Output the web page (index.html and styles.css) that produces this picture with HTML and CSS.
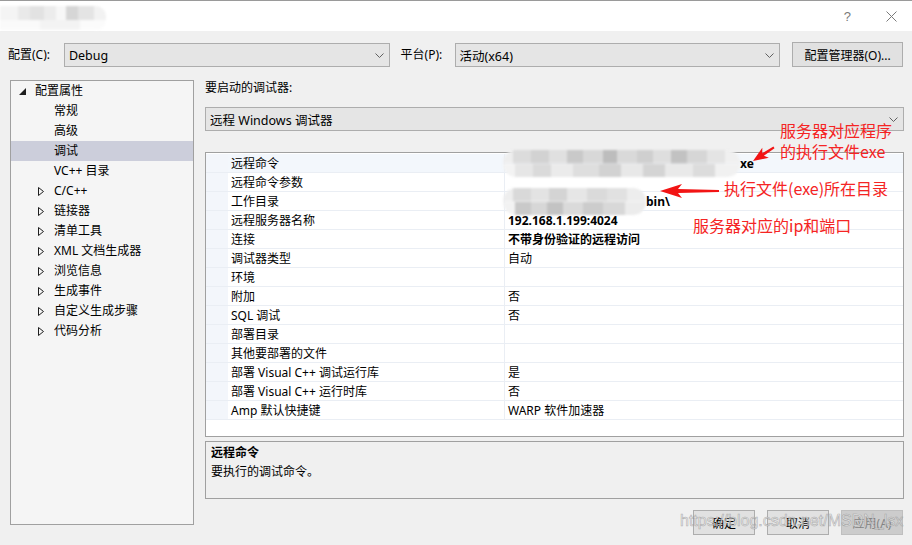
FILE: index.html
```html
<!DOCTYPE html>
<html lang="zh-CN">
<head>
  <meta charset="UTF-8">
  <meta name="viewport" content="width=device-width, initial-scale=1.0">
  <title>调试 属性页</title>
  <link rel="stylesheet" href="styles.css">
</head>
<body>
  <div class="dialog">
    <div class="titlebar">
      <div class="title-smudge"></div>
      <span class="help">?</span>
      <svg class="close" width="11" height="11" viewBox="0 0 11 11">
        <path d="M0.5 0.5 L10.5 10.5 M10.5 0.5 L0.5 10.5" stroke="#7a7a7a" stroke-width="1" fill="none"/>
      </svg>
    </div>

    <div class="toolbar">
      <span class="tb-label">配置(C):</span>
      <div class="select cfg">
        <span>Debug</span>
        <svg class="chev" width="9" height="5" viewBox="0 0 9 5"><path d="M0.5 0.5 L4.5 4.5 L8.5 0.5" stroke="#606060" fill="none"/></svg>
      </div>
      <span class="tb-label plat">平台(P):</span>
      <div class="select cfg">
        <span>活动(x64)</span>
        <svg class="chev" width="9" height="5" viewBox="0 0 9 5"><path d="M0.5 0.5 L4.5 4.5 L8.5 0.5" stroke="#606060" fill="none"/></svg>
      </div>
      <button class="btn mgr">配置管理器(O)...</button>
    </div>

    <div class="main">
      <div class="tree">
        <div class="node root">
          <span class="tw"><svg width="7" height="7" viewBox="0 0 7 7"><path d="M7 0 L7 7 L0 7 Z" fill="#1e1e1e"/></svg></span>
          <span>配置属性</span>
        </div>
        <div class="node leaf">常规</div>
        <div class="node leaf">高级</div>
        <div class="node leaf selected">调试</div>
        <div class="node leaf">VC++ 目录</div>
        <div class="node branch"><span class="tw"><svg width="6" height="9" viewBox="0 0 6 9"><path d="M0.5 0.5 L5.5 4.5 L0.5 8.5 Z" fill="none" stroke="#1e1e1e"/></svg></span><span>C/C++</span></div>
        <div class="node branch"><span class="tw"><svg width="6" height="9" viewBox="0 0 6 9"><path d="M0.5 0.5 L5.5 4.5 L0.5 8.5 Z" fill="none" stroke="#1e1e1e"/></svg></span><span>链接器</span></div>
        <div class="node branch"><span class="tw"><svg width="6" height="9" viewBox="0 0 6 9"><path d="M0.5 0.5 L5.5 4.5 L0.5 8.5 Z" fill="none" stroke="#1e1e1e"/></svg></span><span>清单工具</span></div>
        <div class="node branch"><span class="tw"><svg width="6" height="9" viewBox="0 0 6 9"><path d="M0.5 0.5 L5.5 4.5 L0.5 8.5 Z" fill="none" stroke="#1e1e1e"/></svg></span><span>XML 文档生成器</span></div>
        <div class="node branch"><span class="tw"><svg width="6" height="9" viewBox="0 0 6 9"><path d="M0.5 0.5 L5.5 4.5 L0.5 8.5 Z" fill="none" stroke="#1e1e1e"/></svg></span><span>浏览信息</span></div>
        <div class="node branch"><span class="tw"><svg width="6" height="9" viewBox="0 0 6 9"><path d="M0.5 0.5 L5.5 4.5 L0.5 8.5 Z" fill="none" stroke="#1e1e1e"/></svg></span><span>生成事件</span></div>
        <div class="node branch"><span class="tw"><svg width="6" height="9" viewBox="0 0 6 9"><path d="M0.5 0.5 L5.5 4.5 L0.5 8.5 Z" fill="none" stroke="#1e1e1e"/></svg></span><span>自定义生成步骤</span></div>
        <div class="node branch"><span class="tw"><svg width="6" height="9" viewBox="0 0 6 9"><path d="M0.5 0.5 L5.5 4.5 L0.5 8.5 Z" fill="none" stroke="#1e1e1e"/></svg></span><span>代码分析</span></div>
      </div>

      <div class="pane">
        <div class="pane-label">要启动的调试器:</div>
        <div class="select wide">
          <span>远程 Windows 调试器</span>
          <svg class="chev" width="9" height="5" viewBox="0 0 9 5"><path d="M0.5 0.5 L4.5 4.5 L8.5 0.5" stroke="#606060" fill="none"/></svg>
        </div>

        <div class="grid">
          <div class="row current"><span class="gutter"></span><span class="name">远程命令</span><span class="value"><span class="smudge long"></span><b>xe</b></span></div>
          <div class="row"><span class="gutter"></span><span class="name">远程命令参数</span><span class="value"></span></div>
          <div class="row"><span class="gutter"></span><span class="name">工作目录</span><span class="value"><span class="smudge short"></span><b>bin\</b></span></div>
          <div class="row"><span class="gutter"></span><span class="name">远程服务器名称</span><span class="value"><b>192.168.1.199:4024</b></span></div>
          <div class="row"><span class="gutter"></span><span class="name">连接</span><span class="value"><b>不带身份验证的远程访问</b></span></div>
          <div class="row"><span class="gutter"></span><span class="name">调试器类型</span><span class="value">自动</span></div>
          <div class="row"><span class="gutter"></span><span class="name">环境</span><span class="value"></span></div>
          <div class="row"><span class="gutter"></span><span class="name">附加</span><span class="value">否</span></div>
          <div class="row"><span class="gutter"></span><span class="name">SQL 调试</span><span class="value">否</span></div>
          <div class="row"><span class="gutter"></span><span class="name">部署目录</span><span class="value"></span></div>
          <div class="row"><span class="gutter"></span><span class="name">其他要部署的文件</span><span class="value"></span></div>
          <div class="row"><span class="gutter"></span><span class="name">部署 Visual C++ 调试运行库</span><span class="value">是</span></div>
          <div class="row"><span class="gutter"></span><span class="name">部署 Visual C++ 运行时库</span><span class="value">否</span></div>
          <div class="row"><span class="gutter"></span><span class="name">Amp 默认快捷键</span><span class="value">WARP 软件加速器</span></div>
        </div>

        <div class="desc">
          <div class="desc-title">远程命令</div>
          <div>要执行的调试命令。</div>
        </div>

        <div class="buttons">
          <button class="btn">确定</button>
          <button class="btn">取消</button>
          <button class="btn disabled">应用(A)</button>
        </div>
      </div>
    </div>

    <!-- red notes drawn over the screenshot -->
    <div class="note note-exe">服务器对应程序<br>的执行文件exe</div>
    <div class="note note-dir">执行文件(exe)所在目录</div>
    <div class="note note-ip">服务器对应的ip和端口</div>
    <svg class="arrows" width="912" height="545" viewBox="0 0 912 545">
      <polygon transform="translate(753 161) rotate(-33)" points="0,0 15,-6 12,-1.5 25,-1 25,1 12,1.5 15,6" fill="#f21414"/>
      <polygon transform="translate(660 191)" points="0,0 22,-7 18,-2 59,-1 59,1 18,2 22,7" fill="#f21414"/>
    </svg>
    <div class="watermark">https://blog.csdn.net/MSDN_lsx</div>
  </div>
</body>
</html>
```

FILE: styles.css
```css
* {
  box-sizing: border-box;
}

body {
  margin: 0;
  background-color: #f0f0f0;
  font-family: "Noto Sans", "Noto Sans CJK SC", sans-serif;
  font-size: 12px;
  color: #000;
}

.dialog {
  position: relative;
  width: 912px;
  height: 545px;
  overflow: hidden;
}

.titlebar {
  height: 31px;
  background: #fff;
  border-top: 1px solid #9a9a9a;
  display: flex;
  align-items: center;
}

.title-smudge {
  width: 106px;
  height: 24px;
  margin-top: 3px;
  border-radius: 0 10px 10px 0;
  background:
    linear-gradient(90deg, #f4f4f4 0 18px, #e9e9e9 18px 30px, #e2e2e2 30px 44px, #ececec 44px 56px, #f7f7f7 56px 66px, #d6d6d6 66px 78px, #e4e4e4 78px 94px, #f2f2f2 94px) top / 100% 60% no-repeat,
    linear-gradient(90deg, #fafafa 0 40px, #f3f3f3 40px 80px, #fbfbfb 80px) bottom / 100% 40% no-repeat;
  filter: blur(1px);
}

.help {
  margin-left: auto;
  color: #7a7a7a;
  font-size: 13px;
  font-family: "Liberation Sans", sans-serif;
}

.close {
  margin: 0 15px 0 35px;
}

.toolbar {
  height: 49px;
  padding: 11px 9px 0 8px;
  display: flex;
  align-items: flex-start;
}

.tb-label {
  width: 56px;
  line-height: 25px;
}

.tb-label.plat {
  margin-left: 11px;
  width: 54px;
}

.select {
  height: 24px;
  margin-top: 1px;
  background: #e5e5e5;
  border: 1px solid #adadad;
  display: flex;
  align-items: center;
  padding: 0 5px 0 4px;
  font-size: 12.5px;
}

.select span {
  flex: 1;
}

.select.cfg {
  width: 326px;
}

.btn {
  font-family: inherit;
  font-size: 12px;
  color: #000;
  background: #e1e1e1;
  border: 1px solid #adadad;
  height: 25px;
  padding: 0;
}

.btn.mgr {
  width: 111px;
  margin-left: 12px;
}

.main {
  display: flex;
  padding: 0 8px 0 10px;
}

.tree {
  width: 184px;
  height: 445px;
  background: #f5f5f5;
  border: 1px solid #a0a0a0;
}

.node {
  height: 20px;
  line-height: 20px;
  display: flex;
  align-items: center;
  white-space: nowrap;
}

.node .tw {
  width: 16px;
  display: flex;
  align-items: center;
}

.node.root {
  padding-left: 8px;
}

.node.branch {
  padding-left: 27px;
}

.node.leaf {
  padding-left: 43px;
}

.node.selected {
  background: #cccedb;
}

.pane {
  flex: 1;
  margin-left: 11px;
  display: flex;
  flex-direction: column;
}

.pane-label {
  line-height: 16px;
}

.select.wide {
  margin-top: 11px;
}

.grid {
  margin-top: 21px;
  height: 285px;
  background: #fff;
  border: 1px solid #a0a0a0;
  padding-top: 1px;
}

.row {
  display: flex;
  height: 19px;
  line-height: 20px;
  border-bottom: 1px solid #eaeef4;
  white-space: nowrap;
}

.row.current {
  background: #f3f7fc;
}

.gutter {
  width: 22px;
  background: #f3f6fb;
}

.name {
  width: 277px;
  padding-left: 3px;
  border-right: 1px solid #eaeef4;
}

.value {
  padding-left: 3px;
}

.smudge {
  display: inline-block;
  vertical-align: top;
  height: 27px;
  margin: -4px 0 -7px -5px;
  border-radius: 13px;
  filter: blur(1px);
}

.smudge.long {
  width: 237px;
  background:
    linear-gradient(90deg, #eeeeee 0 10px, #dcdcdc 10px 28px, #d2d2d2 28px 46px, #e0e0e0 46px 64px, #c9c9c9 64px 80px, #d8d8d8 80px 100px, #bdbdbd 100px 114px, #d9d9d9 114px 134px, #cfcfcf 134px 150px, #dedede 150px 168px, #c2c2c2 168px 184px, #d6d6d6 184px 204px, #e4e4e4 204px 222px, #f0f0f0 222px) top / 100% 50% no-repeat,
    linear-gradient(90deg, #f3f3f3 0 12px, #e6e6e6 12px 30px, #dadada 30px 48px, #ebebeb 48px 70px, #dedede 70px 96px, #d2d2d2 96px 118px, #e8e8e8 118px 140px, #d4d4d4 140px 162px, #e9e9e9 162px 190px, #dcdcdc 190px 212px, #f1f1f1 212px) bottom / 100% 50% no-repeat;
}

.smudge.short {
  width: 143px;
  background:
    linear-gradient(90deg, #eeeeee 0 10px, #d9d9d9 10px 28px, #e3e3e3 28px 46px, #d4d4d4 46px 64px, #e6e6e6 64px 84px, #dadada 84px 104px, #e1e1e1 104px 124px, #ededed 124px) top / 100% 50% no-repeat,
    linear-gradient(90deg, #f2f2f2 0 12px, #c9c9c9 12px 28px, #d7d7d7 28px 44px, #c3c3c3 44px 60px, #dadada 60px 80px, #cccccc 80px 100px, #d8d8d8 100px 122px, #ececec 122px) bottom / 100% 50% no-repeat;
}

.desc {
  margin-top: 4px;
  height: 58px;
  border: 1px solid #a0a0a0;
  padding: 1px 5px;
  line-height: 19px;
}

.desc-title {
  font-weight: bold;
}

.buttons {
  margin-top: 11px;
  margin-right: 1px;
  display: flex;
  justify-content: flex-end;
  gap: 12px;
}

.buttons .btn {
  width: 62px;
}

.btn.disabled {
  background: #cccccc;
  border-color: #bfbfbf;
  color: #838383;
}

.note {
  position: absolute;
  color: #f52424;
  font-size: 16px;
  line-height: 21px;
  font-family: "Noto Sans CJK SC", sans-serif;
  white-space: nowrap;
}

.note-exe {
  left: 780px;
  top: 120px;
}

.note-dir {
  left: 724px;
  top: 178px;
}

.note-ip {
  left: 693px;
  top: 215px;
}

.arrows {
  position: absolute;
  left: 0;
  top: 0;
  pointer-events: none;
}

.watermark {
  position: absolute;
  left: 680px;
  top: 512px;
  font-family: "Liberation Sans", sans-serif;
  font-size: 16px;
  color: rgba(240, 240, 240, 0.7);
  -webkit-text-stroke: 0.6px rgba(130, 130, 130, 0.6);
  white-space: nowrap;
}
```
